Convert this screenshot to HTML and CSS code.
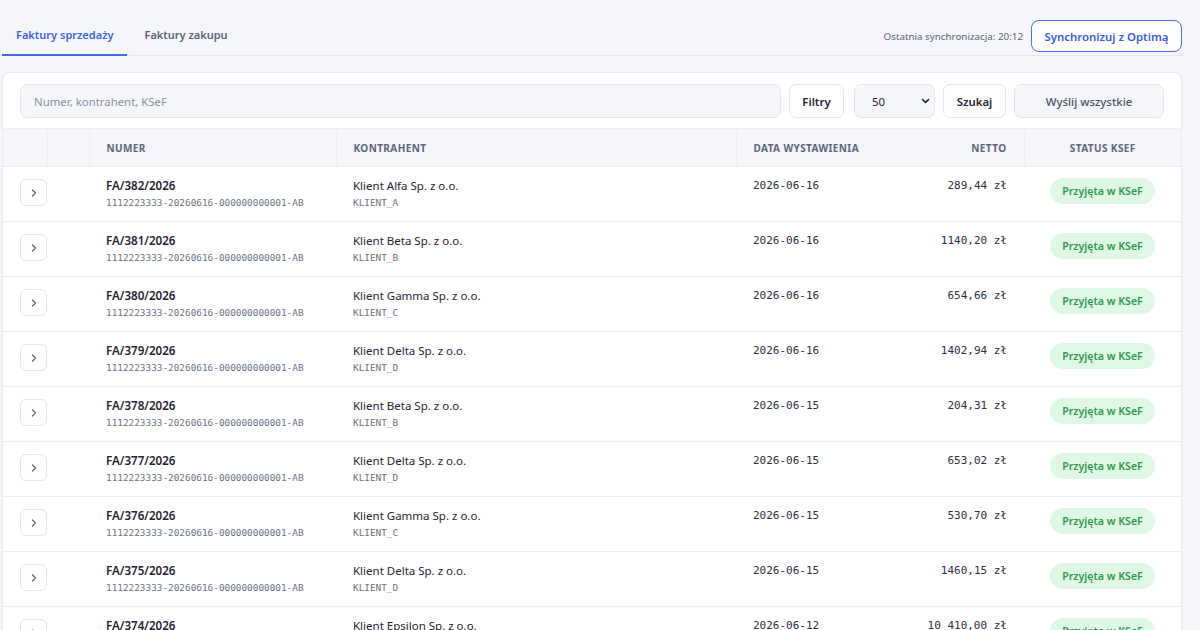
FILE: index.html
```html
<!DOCTYPE html>
<html lang="pl">
<head>
<meta charset="utf-8">
<title>Faktury</title>
<link rel="stylesheet" href="styles.css">
</head>
<body>
<div class="page">
  <header class="topbar">
    <nav class="tabs">
      <a class="tab active">Faktury sprzedaży</a>
      <a class="tab">Faktury zakupu</a>
    </nav>
    <div class="sync">
      <span class="sync-time">Ostatnia synchronizacja: 20:12</span>
      <button class="btn-sync">Synchronizuj z Optimą</button>
    </div>
  </header>

  <section class="card">
    <div class="toolbar">
      <input class="search" type="text" placeholder="Numer, kontrahent, KSeF">
      <button class="btn btn-filter">Filtry</button>
      <span class="select-wrap">
        <select class="select"><option>50</option><option>100</option></select>
        <svg class="select-arrow" width="9" height="6" viewBox="0 0 9 6"><path d="M1.5 1.5 L4.5 4.5 L7.5 1.5" fill="none" stroke="#1f2430" stroke-width="1.6" stroke-linecap="round" stroke-linejoin="round"/></svg>
      </span>
      <button class="btn btn-search">Szukaj</button>
      <button class="btn btn-muted">Wyślij wszystkie</button>
    </div>

    <table class="grid">
      <colgroup>
        <col class="c-exp"><col class="c-sel"><col class="c-num"><col class="c-kon"><col class="c-date"><col class="c-net"><col class="c-stat">
      </colgroup>
      <thead>
        <tr>
          <th></th><th></th>
          <th>Numer</th>
          <th>Kontrahent</th>
          <th class="nodiv">Data wystawienia</th>
          <th class="right">Netto</th>
          <th class="center">Status KSeF</th>
        </tr>
      </thead>
      <tbody>
        <tr>
          <td colspan="2" class="exp"><button class="expand"><svg width="8" height="10" viewBox="0 0 8 10"><path d="M2.5 2 L5.5 5 L2.5 8" fill="none" stroke="#5d677b" stroke-width="1.3" stroke-linecap="round" stroke-linejoin="round"/></svg></button></td>
          <td><div class="num">FA/382/2026</div><div class="code">1112223333-20260616-000000000001-AB</div></td>
          <td><div class="name">Klient Alfa Sp. z o.o.</div><div class="code">KLIENT_A</div></td>
          <td class="mono">2026-06-16</td>
          <td class="mono right">289,44 zł</td>
          <td class="center"><span class="badge">Przyjęta w KSeF</span></td>
        </tr>
        <tr>
          <td colspan="2" class="exp"><button class="expand"><svg width="8" height="10" viewBox="0 0 8 10"><path d="M2.5 2 L5.5 5 L2.5 8" fill="none" stroke="#5d677b" stroke-width="1.3" stroke-linecap="round" stroke-linejoin="round"/></svg></button></td>
          <td><div class="num">FA/381/2026</div><div class="code">1112223333-20260616-000000000001-AB</div></td>
          <td><div class="name">Klient Beta Sp. z o.o.</div><div class="code">KLIENT_B</div></td>
          <td class="mono">2026-06-16</td>
          <td class="mono right">1140,20 zł</td>
          <td class="center"><span class="badge">Przyjęta w KSeF</span></td>
        </tr>
        <tr>
          <td colspan="2" class="exp"><button class="expand"><svg width="8" height="10" viewBox="0 0 8 10"><path d="M2.5 2 L5.5 5 L2.5 8" fill="none" stroke="#5d677b" stroke-width="1.3" stroke-linecap="round" stroke-linejoin="round"/></svg></button></td>
          <td><div class="num">FA/380/2026</div><div class="code">1112223333-20260616-000000000001-AB</div></td>
          <td><div class="name">Klient Gamma Sp. z o.o.</div><div class="code">KLIENT_C</div></td>
          <td class="mono">2026-06-16</td>
          <td class="mono right">654,66 zł</td>
          <td class="center"><span class="badge">Przyjęta w KSeF</span></td>
        </tr>
        <tr>
          <td colspan="2" class="exp"><button class="expand"><svg width="8" height="10" viewBox="0 0 8 10"><path d="M2.5 2 L5.5 5 L2.5 8" fill="none" stroke="#5d677b" stroke-width="1.3" stroke-linecap="round" stroke-linejoin="round"/></svg></button></td>
          <td><div class="num">FA/379/2026</div><div class="code">1112223333-20260616-000000000001-AB</div></td>
          <td><div class="name">Klient Delta Sp. z o.o.</div><div class="code">KLIENT_D</div></td>
          <td class="mono">2026-06-16</td>
          <td class="mono right">1402,94 zł</td>
          <td class="center"><span class="badge">Przyjęta w KSeF</span></td>
        </tr>
        <tr>
          <td colspan="2" class="exp"><button class="expand"><svg width="8" height="10" viewBox="0 0 8 10"><path d="M2.5 2 L5.5 5 L2.5 8" fill="none" stroke="#5d677b" stroke-width="1.3" stroke-linecap="round" stroke-linejoin="round"/></svg></button></td>
          <td><div class="num">FA/378/2026</div><div class="code">1112223333-20260616-000000000001-AB</div></td>
          <td><div class="name">Klient Beta Sp. z o.o.</div><div class="code">KLIENT_B</div></td>
          <td class="mono">2026-06-15</td>
          <td class="mono right">204,31 zł</td>
          <td class="center"><span class="badge">Przyjęta w KSeF</span></td>
        </tr>
        <tr>
          <td colspan="2" class="exp"><button class="expand"><svg width="8" height="10" viewBox="0 0 8 10"><path d="M2.5 2 L5.5 5 L2.5 8" fill="none" stroke="#5d677b" stroke-width="1.3" stroke-linecap="round" stroke-linejoin="round"/></svg></button></td>
          <td><div class="num">FA/377/2026</div><div class="code">1112223333-20260616-000000000001-AB</div></td>
          <td><div class="name">Klient Delta Sp. z o.o.</div><div class="code">KLIENT_D</div></td>
          <td class="mono">2026-06-15</td>
          <td class="mono right">653,02 zł</td>
          <td class="center"><span class="badge">Przyjęta w KSeF</span></td>
        </tr>
        <tr>
          <td colspan="2" class="exp"><button class="expand"><svg width="8" height="10" viewBox="0 0 8 10"><path d="M2.5 2 L5.5 5 L2.5 8" fill="none" stroke="#5d677b" stroke-width="1.3" stroke-linecap="round" stroke-linejoin="round"/></svg></button></td>
          <td><div class="num">FA/376/2026</div><div class="code">1112223333-20260616-000000000001-AB</div></td>
          <td><div class="name">Klient Gamma Sp. z o.o.</div><div class="code">KLIENT_C</div></td>
          <td class="mono">2026-06-15</td>
          <td class="mono right">530,70 zł</td>
          <td class="center"><span class="badge">Przyjęta w KSeF</span></td>
        </tr>
        <tr>
          <td colspan="2" class="exp"><button class="expand"><svg width="8" height="10" viewBox="0 0 8 10"><path d="M2.5 2 L5.5 5 L2.5 8" fill="none" stroke="#5d677b" stroke-width="1.3" stroke-linecap="round" stroke-linejoin="round"/></svg></button></td>
          <td><div class="num">FA/375/2026</div><div class="code">1112223333-20260616-000000000001-AB</div></td>
          <td><div class="name">Klient Delta Sp. z o.o.</div><div class="code">KLIENT_D</div></td>
          <td class="mono">2026-06-15</td>
          <td class="mono right">1460,15 zł</td>
          <td class="center"><span class="badge">Przyjęta w KSeF</span></td>
        </tr>
        <tr>
          <td colspan="2" class="exp"><button class="expand"><svg width="8" height="10" viewBox="0 0 8 10"><path d="M2.5 2 L5.5 5 L2.5 8" fill="none" stroke="#5d677b" stroke-width="1.3" stroke-linecap="round" stroke-linejoin="round"/></svg></button></td>
          <td><div class="num">FA/374/2026</div><div class="code">1112223333-20260612-000000000001-AB</div></td>
          <td><div class="name">Klient Epsilon Sp. z o.o.</div><div class="code">KLIENT_E</div></td>
          <td class="mono">2026-06-12</td>
          <td class="mono right">10 410,00 zł</td>
          <td class="center"><span class="badge">Przyjęta w KSeF</span></td>
        </tr>
      </tbody>
    </table>
  </section>
</div>
</body>
</html>
```

FILE: styles.css
```css
* { box-sizing: border-box; }

html, body {
  margin: 0;
  padding: 0;
  background: #f5f6fa;
  font-family: "Noto Sans", "Open Sans", sans-serif;
  color: #1f2430;
}

.page {
  width: 1200px;
  padding: 0 18px 0 2px;
}

.topbar {
  display: flex;
  align-items: center;
  justify-content: space-between;
  padding-top: 15px;
  border-bottom: 1px solid #e6e8ee;
}

.tabs {
  display: flex;
  align-self: stretch;
  gap: 3px;
}

.tab {
  display: flex;
  align-items: center;
  height: 41px;
  padding: 0 14px 1px;
  font-size: 11px;
  font-weight: 600;
  color: #5d6474;
  border-bottom: 2px solid transparent;
  margin-bottom: -1px;
  cursor: pointer;
}

.tab.active {
  color: #3f62ea;
  border-bottom-color: #4467ee;
}

.sync {
  display: flex;
  align-items: center;
  gap: 8px;
  padding-top: 2px;
}

.sync-time {
  font-size: 9.8px;
  color: #5b6375;
}

.btn-sync {
  height: 32px;
  width: 151px;
  padding: 0;
  background: #fff;
  border: 1.5px solid #4d6cf0;
  border-radius: 8px;
  font-family: inherit;
  font-size: 11.4px;
  font-weight: 600;
  color: #3a5ae6;
}

.card {
  margin-top: 16px;
  background: #fff;
  border: 1px solid #e8eaf0;
  border-radius: 8px 8px 0 0;
  overflow: hidden;
}

.toolbar {
  display: flex;
  align-items: center;
  gap: 8px;
  padding: 11px 17px 10px;
}

.search {
  flex: 1;
  height: 34px;
  padding: 0 13px;
  background: #f5f6fa;
  border: 1px solid #e3e6ed;
  border-radius: 7px;
  font-family: inherit;
  font-size: 11.4px;
  color: #1f2430;
  outline: none;
}

.search::placeholder { color: #8a91a0; }

.btn {
  height: 34px;
  padding: 0;
  background: #fff;
  border: 1px solid #e3e6ed;
  border-radius: 7px;
  font-family: inherit;
  font-size: 11.4px;
  font-weight: 600;
  color: #1f2430;
}

.btn-filter { width: 55px; }
.btn-search { width: 63px; }

.btn-muted {
  width: 150px;
  background: #f5f6fa;
  font-weight: 500;
  color: #4a5262;
}

.select-wrap {
  position: relative;
  margin-left: 2px;
  height: 34px;
}

.select {
  appearance: none;
  -webkit-appearance: none;
  width: 81px;
  height: 34px;
  padding: 0 17px;
  background: #f5f6fa;
  border: 1px solid #e3e6ed;
  border-radius: 7px;
  font-family: inherit;
  font-size: 11.4px;
  color: #1f2430;
}

.select-arrow {
  position: absolute;
  top: 14px;
  right: 5px;
}

.grid {
  width: 100%;
  border-collapse: collapse;
  table-layout: fixed;
}

.c-exp { width: 44px; }
.c-sel { width: 42px; }
.c-num { width: 247px; }
.c-kon { width: 400px; }
.c-date { width: 155px; }
.c-net { width: 133px; }
.c-stat { width: auto; }

.grid thead th {
  height: 38px;
  background: #f3f5f9;
  border-top: 1px solid #eceef3;
  border-bottom: 1px solid #e8ebf1;
  border-right: 1px solid #eceef3;
  padding: 0 17px;
  text-align: left;
  font-size: 10px;
  font-weight: 700;
  letter-spacing: 0.04em;
  text-transform: uppercase;
  color: #5d677b;
}

.grid thead th.nodiv { border-right-color: transparent; }
.grid thead th:last-child { border-right: none; }

.grid th.right, .grid td.right { text-align: right; }
.grid th.center, .grid td.center { text-align: center; }

.grid tbody td {
  height: 55px;
  padding: 10px 17px 0;
  vertical-align: top;
  border-bottom: 1px solid #eceef3;
}

.grid tbody td.exp {
  padding: 12px 0 0 17px;
}

.expand {
  display: flex;
  align-items: center;
  justify-content: center;
  width: 27px;
  height: 27px;
  padding: 0;
  background: #fff;
  border: 1px solid #e3e6ed;
  border-radius: 6px;
}

.num {
  font-size: 11.6px;
  font-weight: 600;
  line-height: 18px;
  color: #1f2430;
}

.name {
  font-size: 11.5px;
  line-height: 18px;
  color: #1f2430;
}

.code {
  font-family: "DejaVu Sans Mono", monospace;
  font-size: 9.4px;
  line-height: 16px;
  color: #6b7384;
}

.mono {
  font-family: "DejaVu Sans Mono", monospace;
  font-size: 11px;
  line-height: 18px;
  color: #2a303b;
}

.grid tbody td.center { padding-top: 11px; }

.badge {
  display: inline-block;
  height: 26px;
  line-height: 26px;
  padding: 0 12px;
  background: #dff8e6;
  border-radius: 13px;
  font-size: 10.6px;
  font-weight: 600;
  color: #2f9a4d;
}
```
